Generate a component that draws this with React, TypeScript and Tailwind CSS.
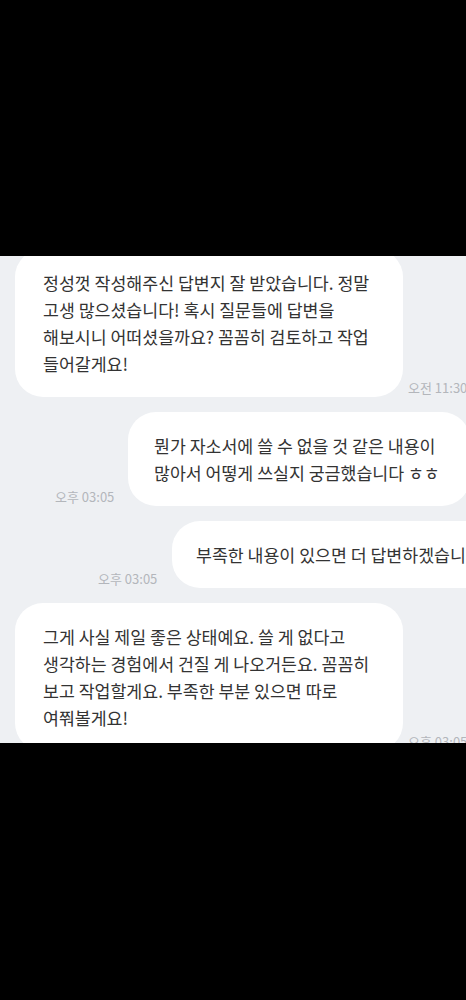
import React from "react";

const font = { fontFamily: '"Noto Sans CJK KR", "Noto Sans", sans-serif' };

function Bubble({ children, className = "" }: { children: React.ReactNode; className?: string }) {
  return (
    <div className={`bg-white rounded-[28px] py-5 text-[17.3px] leading-[27px] text-[#333] ${className}`}>
      {children}
    </div>
  );
}

function Time({ children, className = "" }: { children: React.ReactNode; className?: string }) {
  return <div className={`text-[13px] leading-[16px] text-[#b3b6bb] whitespace-nowrap ${className}`}>{children}</div>;
}

export default function App() {
  return (
    <div className="w-[466px] h-[1000px] bg-black flex flex-col" style={font}>
      <div className="h-[256px] shrink-0" />
      <div className="h-[487px] shrink-0 bg-[#eef0f3] overflow-hidden">
        <div className="flex flex-col gap-[15px] -mt-[7px] w-[560px]">
          <div className="flex items-end pl-[15px]">
            <Bubble className="w-[388px] px-7">
              정성껏 작성해주신 답변지 잘 받았습니다. 정말<br />
              고생 많으셨습니다! 혹시 질문들에 답변을<br />
              해보시니 어떠셨을까요? 꼼꼼히 검토하고 작업<br />
              들어갈게요!
            </Bubble>
            <Time className="ml-[5px] mb-[1px]">오전 11:30</Time>
          </div>
          <div className="flex items-end pl-[55px]">
            <Time className="w-[73px] mb-[1px]">오후 03:05</Time>
            <Bubble className="whitespace-nowrap pl-[26px] pr-[30px]">
              뭔가 자소서에 쓸 수 없을 것 같은 내용이<br />
              많아서 어떻게 쓰실지 궁금했습니다 ㅎㅎ
            </Bubble>
          </div>
          <div className="flex items-end pl-[98px]">
            <Time className="w-[74px] mb-[1px]">오후 03:05</Time>
            <Bubble className="whitespace-nowrap pl-[24px] pr-[30px]">부족한 내용이 있으면 더 답변하겠습니다</Bubble>
          </div>
          <div className="flex items-end pl-[15px]">
            <Bubble className="w-[388px] px-7">
              그게 사실 제일 좋은 상태예요. 쓸 게 없다고<br />
              생각하는 경험에서 건질 게 나오거든요. 꼼꼼히<br />
              보고 작업할게요. 부족한 부분 있으면 따로<br />
              여쭤볼게요!
            </Bubble>
            <Time className="ml-[5px] mb-[1px]">오후 03:05</Time>
          </div>
        </div>
      </div>
      <div className="flex-1" />
    </div>
  );
}
